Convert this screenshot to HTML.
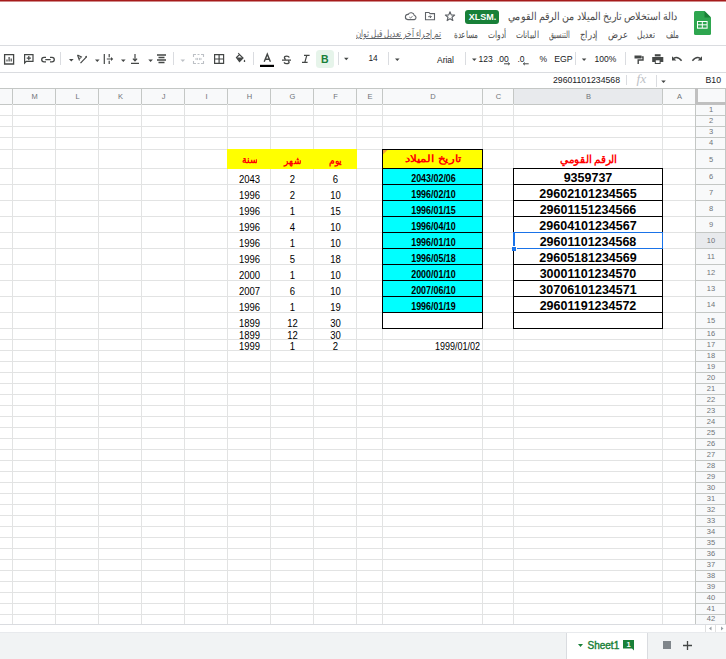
<!DOCTYPE html><html><head><meta charset="utf-8"><style>
*{margin:0;padding:0;box-sizing:border-box}
html,body{width:726px;height:659px;overflow:hidden;background:#fff}
body{position:relative;font-family:"Liberation Sans",sans-serif;color:#202124}
div,span,svg{position:absolute}
.t{white-space:nowrap;line-height:1}
</style></head><body>
<div style="left:0px;top:0px;width:726px;height:1px;background:#a61b1b"></div>
<div style="left:0px;top:1px;width:726px;height:1px;background:#d08a8a"></div>
<div style="left:0px;top:45px;width:726px;height:1px;background:#dadce0"></div>
<div style="left:0px;top:72px;width:726px;height:1px;background:#dadce0"></div>
<svg style="left:693px;top:10px" width="19" height="26" viewBox="0 0 19 26"><path d="M2.5 1H11.5L18 7.5V23.5Q18 25 16.5 25H2.5Q1 25 1 23.5V2.5Q1 1 2.5 1Z" fill="#2ea64f"/><path d="M11.5 1V7.5H18Z" fill="#1a7f37"/><rect x="4" y="11" width="10.6" height="7.7" fill="#fff"/><rect x="5" y="12" width="3.8" height="2.3" fill="#2ea64f"/><rect x="9.8" y="12" width="3.8" height="2.3" fill="#2ea64f"/><rect x="5" y="15.3" width="3.8" height="2.3" fill="#2ea64f"/><rect x="9.8" y="15.3" width="3.8" height="2.3" fill="#2ea64f"/></svg>
<span class="t" style="right:48px;top:11px;font-size:10.5px;color:#4d4d4d;transform:scaleX(0.8695);transform-origin:100% 50%">دالة استخلاص تاريخ الميلاد من الرقم القومي</span>
<div style="left:465px;top:10px;width:34px;height:14px;background:#188038;border-radius:3px"></div>
<span class="t " style="left:465.5px;top:12.8px;width:34px;text-align:center;font-size:9px;font-weight:bold;color:#fff">XLSM.</span>
<svg style="left:440px;top:8px" width="20" height="16" viewBox="0 0 20 16"><path d="M10.00 3.70L11.23 6.90L14.66 7.09L12.00 9.25L12.88 12.56L10.00 10.70L7.12 12.56L8.00 9.25L5.34 7.09L8.77 6.90Z" fill="none" stroke="#5f6368" stroke-width="1.1" stroke-linejoin="round"/></svg>
<svg style="left:420px;top:8px" width="20" height="16" viewBox="0 0 20 16"><path d="M5.5 4.5H9L10 5.6H14.5V11.8H5.5Z" fill="none" stroke="#5f6368" stroke-width="1.1"/><path d="M8.2 8.7H11.3M10 7.4L11.3 8.7L10 10" fill="none" stroke="#5f6368" stroke-width="1"/></svg>
<svg style="left:400px;top:8px" width="20" height="16" viewBox="0 0 20 16"><path d="M7.8 11.6H14.4A2.1 2.1 0 0 0 14.3 7.5A3.3 3.3 0 0 0 8.2 6.4A2.6 2.6 0 0 0 7.8 11.6Z" fill="none" stroke="#5f6368" stroke-width="1.1"/><path d="M9.3 9L10.6 10.1L12.4 8.2" fill="none" stroke="#5f6368" stroke-width="0.9"/></svg>
<span class="t" style="right:47px;top:29.5px;font-size:9.5px;color:#4d4d4d;transform:scaleX(0.7222);transform-origin:100% 50%">ملف</span>
<span class="t" style="right:71px;top:29.5px;font-size:9.5px;color:#4d4d4d;transform:scaleX(0.7500);transform-origin:100% 50%">تعديل</span>
<span class="t" style="right:98px;top:29.5px;font-size:9.5px;color:#4d4d4d;transform:scaleX(0.8333);transform-origin:100% 50%">عرض</span>
<span class="t" style="right:128px;top:29.5px;font-size:9.5px;color:#4d4d4d;transform:scaleX(0.8571);transform-origin:100% 50%">إدراج</span>
<span class="t" style="right:156px;top:29.5px;font-size:9.5px;color:#4d4d4d;transform:scaleX(0.6562);transform-origin:100% 50%">التنسيق</span>
<span class="t" style="right:187px;top:29.5px;font-size:9.5px;color:#4d4d4d;transform:scaleX(0.7667);transform-origin:100% 50%">البيانات</span>
<span class="t" style="right:220px;top:29.5px;font-size:9.5px;color:#4d4d4d;transform:scaleX(0.7500);transform-origin:100% 50%">أدوات</span>
<span class="t" style="right:248px;top:29.5px;font-size:9.5px;color:#4d4d4d;transform:scaleX(0.7273);transform-origin:100% 50%">مساعدة</span>
<span class="t" style="right:285px;top:29px;font-size:9.5px;color:#5f6368;text-decoration:underline;transform:scaleX(0.7131);transform-origin:100% 50%">تم إجراء آخر تعديل قبل ثوان</span>
<svg style="left:0;top:0" width="726" height="88"><path d="M4.6 54.6H13.6V64H4.6Z" fill="none" stroke="#444746" stroke-width="1.3"/><path d="M6.4 59.4H7.6V61.6H6.4ZM8.5 57.1H9.7V61.6H8.5ZM10.6 58.5H11.8V61.6H10.6Z" fill="#444746"/><path d="M24.6 54.6H33V61.3H26.3L24.6 63Z" fill="none" stroke="#444746" stroke-width="1.2"/><path d="M28.8 56V60.2M26.7 58.1H30.9" fill="none" stroke="#444746" stroke-width="1.2"/><path d="M46 57.3H44A2.3 2.3 0 0 0 44 61.9H46M50 57.3H52A2.3 2.3 0 0 1 52 61.9H50M45.3 59.6H50.7" fill="none" stroke="#444746" stroke-width="1.3"/><rect x="60" y="52" width="1" height="13" fill="#dadce0"/><path d="M69 59H73.6L71.3 61.4Z" fill="#444746"/><path d="M77.5 55L82 57.2M77.5 55L79.5 60.5M79 58.5L81 57.8" fill="none" stroke="#444746" stroke-width="1.1"/><path d="M80.5 63.2L86.5 56.8" fill="none" stroke="#444746" stroke-width="1.2"/><path d="M85 56.2L87 55.8L86.7 57.8Z" fill="#444746"/><path d="M95 59.5H99.6L97.3 61.9Z" fill="#444746"/><path d="M104.3 54V64M109.2 54V57.2M109.2 60.8V64M106.8 59H112" fill="none" stroke="#444746" stroke-width="1.2"/><path d="M111 56.9L113.2 59L111 61.1Z" fill="#444746"/><path d="M121 59.5H125.6L123.3 61.9Z" fill="#444746"/><path d="M131 63.3H139M135 54V60.5M132.9 58.6L135 60.9L137.1 58.6" fill="none" stroke="#444746" stroke-width="1.2"/><path d="M148.3 59.5H152.9L150.60000000000002 61.9Z" fill="#444746"/><path d="M157 55H166M158.5 57.5H164.5M157 60H166M158.5 62.5H164.5" fill="none" stroke="#444746" stroke-width="1.3"/><rect x="173" y="52" width="1" height="13" fill="#dadce0"/><path d="M180.5 59.5H185.1L182.8 61.9Z" fill="#bdc1c6"/><path d="M193.5 57V54.5H196M197.5 54.5H199.5M201 54.5H203.5V57M193.5 61V63.5H196M197.5 63.5H199.5M201 63.5H203.5V61" fill="none" stroke="#bdc1c6" stroke-width="1.1"/><path d="M195 59H197.6M201.9 59H199.4" fill="none" stroke="#bdc1c6" stroke-width="1.1"/><path d="M196.9 57.6L198.3 59L196.9 60.4ZM200.1 57.6L198.7 59L200.1 60.4Z" fill="#bdc1c6"/><path d="M214.6 54.6H223.6V63.4H214.6ZM219.1 54.6V63.4M214.6 59H223.6" fill="none" stroke="#444746" stroke-width="1.2"/><path d="M236.5 57.5L239.5 54.5L243 58L239.5 61.5Z" fill="none" stroke="#444746" stroke-width="1.2"/><path d="M236.5 57.5H243L239.5 61.5Z" fill="#444746"/><path d="M238.2 53L239.5 54.5" fill="none" stroke="#444746" stroke-width="1.1"/><path d="M244.5 59.5Q245.6 61 245.2 61.7Q244.5 62.4 243.8 61.7Q243.4 61 244.5 59.5Z" fill="#444746"/><rect x="253" y="52" width="1" height="13" fill="#dadce0"/><path d="M264.2 61.7L267.3 54.2L270.4 61.7M265.3 59.2H269.3" fill="none" stroke="#444746" stroke-width="1.4"/><rect x="260" y="64.8" width="14" height="2.2" fill="#000"/><path d="M289.3 57.4Q288.8 56.1 286.7 56.1Q284.4 56.1 284.4 57.8Q284.4 58.8 285.7 59.4M288.2 61Q289.1 61.6 289.1 62.2Q289.1 63.6 286.7 63.6Q284.7 63.6 284 62.4M282 60.2H291" fill="none" stroke="#444746" stroke-width="1.3"/><path d="M304 55.4H309.6M302 62.3H307.6M306.8 55.4L304.8 62.3" fill="none" stroke="#444746" stroke-width="1.2"/><rect x="316" y="50" width="18" height="18" rx="3.5" fill="#e6f4ea"/><rect x="338" y="52" width="1" height="13" fill="#dadce0"/><path d="M344 57.8H348.6L346.3 60.199999999999996Z" fill="#444746"/><rect x="388" y="52" width="1" height="13" fill="#dadce0"/><path d="M395 58.6H399.6L397.3 61.0Z" fill="#444746"/><rect x="465" y="52" width="1" height="13" fill="#dadce0"/><path d="M472 58.6H476.6L474.3 61.0Z" fill="#444746"/><path d="M504 63.8H509.5M508.2 62.6L509.6 63.8L508.2 65" fill="none" stroke="#444746" stroke-width="1.0"/><path d="M523.5 63.8H528.7M524.8 62.6L523.4 63.8L524.8 65" fill="none" stroke="#444746" stroke-width="1.0"/><rect x="575" y="52" width="1" height="13" fill="#dadce0"/><path d="M581.8 58.6H586.4L584.0999999999999 61.0Z" fill="#444746"/><rect x="625" y="52" width="1" height="13" fill="#dadce0"/><path d="M634.5 55.5H641.5V58.5H634.5Z" fill="#444746"/><path d="M641.5 57H643V60H638.2V64" fill="none" stroke="#444746" stroke-width="1.4"/><path d="M654.8 54.2H660.6V56.4H654.8Z" fill="#444746"/><path d="M652.2 57H663.3V62H660.6V64H654.8V62H652.2Z" fill="#444746"/><path d="M655.8 60.3H659.6V63H655.8Z" fill="#fff"/><path d="M673.5 58.5Q677.6 55.5 681.6 60.8" fill="none" stroke="#444746" stroke-width="1.5"/><path d="M672 56.3V60.6H676.3Z" fill="#444746"/><path d="M700.5 58.5Q696.4 55.5 692.4 60.8" fill="none" stroke="#444746" stroke-width="1.5"/><path d="M702 56.3V60.6H697.7Z" fill="#444746"/><rect x="626" y="75" width="1" height="10" fill="#dadce0"/><rect x="656" y="75" width="1" height="12" fill="#dadce0"/><path d="M661.2 80.6H665.8000000000001L663.5 83.0Z" fill="#444746"/></svg>
<span class="t " style="left:316px;top:53.5px;width:17.5px;text-align:center;font-size:10.5px;font-weight:bold;color:#188038">B</span>
<span class="t " style="left:360.5px;top:54px;width:25px;text-align:center;font-size:8.3px;color:#202124">14</span>
<span class="t " style="left:419px;top:55.5px;width:35px;text-align:right;font-size:8.5px;color:#202124">Arial</span>
<span class="t " style="left:478.5px;top:54.5px;font-size:8.5px;color:#202124">123</span>
<span class="t " style="left:497px;top:54.5px;font-size:8.5px;color:#202124">.00</span>
<span class="t " style="left:517.5px;top:54.5px;font-size:8.5px;color:#202124">.0</span>
<span class="t " style="left:539.5px;top:54.5px;font-size:8.5px;color:#202124">%</span>
<span class="t " style="left:554.3px;top:54.5px;font-size:8.7px;color:#202124">EGP</span>
<span class="t " style="left:594.5px;top:54.5px;font-size:8.5px;color:#202124">100%</span>
<span class="t " style="left:500px;top:75.5px;width:120px;text-align:right;font-size:8.7px;color:#202124">29601101234568</span>
<span class="t " style="left:636.5px;top:72px;font-size:13.5px;font-family:Liberation Serif,serif;font-style:italic;color:#bdc1c6">fx</span>
<span class="t " style="left:690px;top:75.5px;width:31px;text-align:right;font-size:8.7px;color:#202124">B10</span>
<div style="left:0px;top:88px;width:726px;height:16px;background:#f8f9fa"></div>
<div style="left:0px;top:88px;width:726px;height:1px;background:#c4c7c5"></div>
<div style="left:513px;top:89px;width:149px;height:15px;background:#e8eaed"></div>
<div style="left:0px;top:104px;width:695px;height:1px;background:#c4c7c5"></div>
<div style="left:695px;top:104px;width:31px;height:520px;background:#f8f9fa"></div>
<div style="left:696px;top:233px;width:29px;height:15px;background:#e8eaed"></div>
<div style="left:12px;top:104px;width:1px;height:520px;background:#e2e3e3"></div>
<div style="left:12px;top:88px;width:1px;height:16px;background:#c4c7c5"></div>
<div style="left:55px;top:104px;width:1px;height:520px;background:#e2e3e3"></div>
<div style="left:55px;top:88px;width:1px;height:16px;background:#c4c7c5"></div>
<div style="left:98px;top:104px;width:1px;height:520px;background:#e2e3e3"></div>
<div style="left:98px;top:88px;width:1px;height:16px;background:#c4c7c5"></div>
<div style="left:141px;top:104px;width:1px;height:520px;background:#e2e3e3"></div>
<div style="left:141px;top:88px;width:1px;height:16px;background:#c4c7c5"></div>
<div style="left:184px;top:104px;width:1px;height:520px;background:#e2e3e3"></div>
<div style="left:184px;top:88px;width:1px;height:16px;background:#c4c7c5"></div>
<div style="left:227px;top:104px;width:1px;height:520px;background:#e2e3e3"></div>
<div style="left:227px;top:88px;width:1px;height:16px;background:#c4c7c5"></div>
<div style="left:270px;top:104px;width:1px;height:520px;background:#e2e3e3"></div>
<div style="left:270px;top:88px;width:1px;height:16px;background:#c4c7c5"></div>
<div style="left:313px;top:104px;width:1px;height:520px;background:#e2e3e3"></div>
<div style="left:313px;top:88px;width:1px;height:16px;background:#c4c7c5"></div>
<div style="left:356px;top:104px;width:1px;height:520px;background:#e2e3e3"></div>
<div style="left:356px;top:88px;width:1px;height:16px;background:#c4c7c5"></div>
<div style="left:382px;top:104px;width:1px;height:520px;background:#e2e3e3"></div>
<div style="left:382px;top:88px;width:1px;height:16px;background:#c4c7c5"></div>
<div style="left:482px;top:104px;width:1px;height:520px;background:#e2e3e3"></div>
<div style="left:482px;top:88px;width:1px;height:16px;background:#c4c7c5"></div>
<div style="left:513px;top:104px;width:1px;height:520px;background:#e2e3e3"></div>
<div style="left:513px;top:88px;width:1px;height:16px;background:#c4c7c5"></div>
<div style="left:662px;top:104px;width:1px;height:520px;background:#e2e3e3"></div>
<div style="left:662px;top:88px;width:1px;height:16px;background:#c4c7c5"></div>
<div style="left:0px;top:115px;width:695px;height:1px;background:#e2e3e3"></div>
<div style="left:695px;top:115px;width:31px;height:1px;background:#c4c7c5"></div>
<div style="left:0px;top:126px;width:695px;height:1px;background:#e2e3e3"></div>
<div style="left:695px;top:126px;width:31px;height:1px;background:#c4c7c5"></div>
<div style="left:0px;top:137px;width:695px;height:1px;background:#e2e3e3"></div>
<div style="left:695px;top:137px;width:31px;height:1px;background:#c4c7c5"></div>
<div style="left:0px;top:149px;width:695px;height:1px;background:#e2e3e3"></div>
<div style="left:695px;top:149px;width:31px;height:1px;background:#c4c7c5"></div>
<div style="left:0px;top:168px;width:695px;height:1px;background:#e2e3e3"></div>
<div style="left:695px;top:168px;width:31px;height:1px;background:#c4c7c5"></div>
<div style="left:0px;top:184px;width:695px;height:1px;background:#e2e3e3"></div>
<div style="left:695px;top:184px;width:31px;height:1px;background:#c4c7c5"></div>
<div style="left:0px;top:200px;width:695px;height:1px;background:#e2e3e3"></div>
<div style="left:695px;top:200px;width:31px;height:1px;background:#c4c7c5"></div>
<div style="left:0px;top:216px;width:695px;height:1px;background:#e2e3e3"></div>
<div style="left:695px;top:216px;width:31px;height:1px;background:#c4c7c5"></div>
<div style="left:0px;top:232px;width:695px;height:1px;background:#e2e3e3"></div>
<div style="left:695px;top:232px;width:31px;height:1px;background:#c4c7c5"></div>
<div style="left:0px;top:248px;width:695px;height:1px;background:#e2e3e3"></div>
<div style="left:695px;top:248px;width:31px;height:1px;background:#c4c7c5"></div>
<div style="left:0px;top:264px;width:695px;height:1px;background:#e2e3e3"></div>
<div style="left:695px;top:264px;width:31px;height:1px;background:#c4c7c5"></div>
<div style="left:0px;top:280px;width:695px;height:1px;background:#e2e3e3"></div>
<div style="left:695px;top:280px;width:31px;height:1px;background:#c4c7c5"></div>
<div style="left:0px;top:296px;width:695px;height:1px;background:#e2e3e3"></div>
<div style="left:695px;top:296px;width:31px;height:1px;background:#c4c7c5"></div>
<div style="left:0px;top:312px;width:695px;height:1px;background:#e2e3e3"></div>
<div style="left:695px;top:312px;width:31px;height:1px;background:#c4c7c5"></div>
<div style="left:0px;top:328px;width:695px;height:1px;background:#e2e3e3"></div>
<div style="left:695px;top:328px;width:31px;height:1px;background:#c4c7c5"></div>
<div style="left:0px;top:339px;width:695px;height:1px;background:#e2e3e3"></div>
<div style="left:695px;top:339px;width:31px;height:1px;background:#c4c7c5"></div>
<div style="left:0px;top:350px;width:695px;height:1px;background:#e2e3e3"></div>
<div style="left:695px;top:350px;width:31px;height:1px;background:#c4c7c5"></div>
<div style="left:0px;top:361px;width:695px;height:1px;background:#e2e3e3"></div>
<div style="left:695px;top:361px;width:31px;height:1px;background:#c4c7c5"></div>
<div style="left:0px;top:372px;width:695px;height:1px;background:#e2e3e3"></div>
<div style="left:695px;top:372px;width:31px;height:1px;background:#c4c7c5"></div>
<div style="left:0px;top:383px;width:695px;height:1px;background:#e2e3e3"></div>
<div style="left:695px;top:383px;width:31px;height:1px;background:#c4c7c5"></div>
<div style="left:0px;top:394px;width:695px;height:1px;background:#e2e3e3"></div>
<div style="left:695px;top:394px;width:31px;height:1px;background:#c4c7c5"></div>
<div style="left:0px;top:405px;width:695px;height:1px;background:#e2e3e3"></div>
<div style="left:695px;top:405px;width:31px;height:1px;background:#c4c7c5"></div>
<div style="left:0px;top:416px;width:695px;height:1px;background:#e2e3e3"></div>
<div style="left:695px;top:416px;width:31px;height:1px;background:#c4c7c5"></div>
<div style="left:0px;top:427px;width:695px;height:1px;background:#e2e3e3"></div>
<div style="left:695px;top:427px;width:31px;height:1px;background:#c4c7c5"></div>
<div style="left:0px;top:438px;width:695px;height:1px;background:#e2e3e3"></div>
<div style="left:695px;top:438px;width:31px;height:1px;background:#c4c7c5"></div>
<div style="left:0px;top:449px;width:695px;height:1px;background:#e2e3e3"></div>
<div style="left:695px;top:449px;width:31px;height:1px;background:#c4c7c5"></div>
<div style="left:0px;top:460px;width:695px;height:1px;background:#e2e3e3"></div>
<div style="left:695px;top:460px;width:31px;height:1px;background:#c4c7c5"></div>
<div style="left:0px;top:471px;width:695px;height:1px;background:#e2e3e3"></div>
<div style="left:695px;top:471px;width:31px;height:1px;background:#c4c7c5"></div>
<div style="left:0px;top:482px;width:695px;height:1px;background:#e2e3e3"></div>
<div style="left:695px;top:482px;width:31px;height:1px;background:#c4c7c5"></div>
<div style="left:0px;top:493px;width:695px;height:1px;background:#e2e3e3"></div>
<div style="left:695px;top:493px;width:31px;height:1px;background:#c4c7c5"></div>
<div style="left:0px;top:504px;width:695px;height:1px;background:#e2e3e3"></div>
<div style="left:695px;top:504px;width:31px;height:1px;background:#c4c7c5"></div>
<div style="left:0px;top:515px;width:695px;height:1px;background:#e2e3e3"></div>
<div style="left:695px;top:515px;width:31px;height:1px;background:#c4c7c5"></div>
<div style="left:0px;top:526px;width:695px;height:1px;background:#e2e3e3"></div>
<div style="left:695px;top:526px;width:31px;height:1px;background:#c4c7c5"></div>
<div style="left:0px;top:537px;width:695px;height:1px;background:#e2e3e3"></div>
<div style="left:695px;top:537px;width:31px;height:1px;background:#c4c7c5"></div>
<div style="left:0px;top:548px;width:695px;height:1px;background:#e2e3e3"></div>
<div style="left:695px;top:548px;width:31px;height:1px;background:#c4c7c5"></div>
<div style="left:0px;top:559px;width:695px;height:1px;background:#e2e3e3"></div>
<div style="left:695px;top:559px;width:31px;height:1px;background:#c4c7c5"></div>
<div style="left:0px;top:570px;width:695px;height:1px;background:#e2e3e3"></div>
<div style="left:695px;top:570px;width:31px;height:1px;background:#c4c7c5"></div>
<div style="left:0px;top:581px;width:695px;height:1px;background:#e2e3e3"></div>
<div style="left:695px;top:581px;width:31px;height:1px;background:#c4c7c5"></div>
<div style="left:0px;top:592px;width:695px;height:1px;background:#e2e3e3"></div>
<div style="left:695px;top:592px;width:31px;height:1px;background:#c4c7c5"></div>
<div style="left:0px;top:603px;width:695px;height:1px;background:#e2e3e3"></div>
<div style="left:695px;top:603px;width:31px;height:1px;background:#c4c7c5"></div>
<div style="left:0px;top:614px;width:695px;height:1px;background:#e2e3e3"></div>
<div style="left:695px;top:614px;width:31px;height:1px;background:#c4c7c5"></div>
<div style="left:0px;top:624px;width:695px;height:1px;background:#e2e3e3"></div>
<div style="left:695px;top:624px;width:31px;height:1px;background:#c4c7c5"></div>
<div style="left:0px;top:624px;width:726px;height:1px;background:#dadce0"></div>
<div style="left:695px;top:104px;width:1px;height:520px;background:#c4c7c5"></div>
<div style="left:725px;top:88px;width:1px;height:536px;background:#c4c7c5"></div>
<div style="left:695px;top:88px;width:3px;height:16px;background:#c0c0c0"></div>
<div style="left:695px;top:102px;width:31px;height:3px;background:#c0c0c0"></div>
<span class="t " style="left:13px;top:93px;width:43px;text-align:center;font-size:7.5px;color:#6f7479">M</span>
<span class="t " style="left:56px;top:93px;width:43px;text-align:center;font-size:7.5px;color:#6f7479">L</span>
<span class="t " style="left:99px;top:93px;width:43px;text-align:center;font-size:7.5px;color:#6f7479">K</span>
<span class="t " style="left:142px;top:93px;width:43px;text-align:center;font-size:7.5px;color:#6f7479">J</span>
<span class="t " style="left:185px;top:93px;width:43px;text-align:center;font-size:7.5px;color:#6f7479">I</span>
<span class="t " style="left:228px;top:93px;width:43px;text-align:center;font-size:7.5px;color:#6f7479">H</span>
<span class="t " style="left:271px;top:93px;width:43px;text-align:center;font-size:7.5px;color:#6f7479">G</span>
<span class="t " style="left:314px;top:93px;width:43px;text-align:center;font-size:7.5px;color:#6f7479">F</span>
<span class="t " style="left:357px;top:93px;width:26px;text-align:center;font-size:7.5px;color:#6f7479">E</span>
<span class="t " style="left:383px;top:93px;width:100px;text-align:center;font-size:7.5px;color:#6f7479">D</span>
<span class="t " style="left:483px;top:93px;width:31px;text-align:center;font-size:7.5px;color:#6f7479">C</span>
<span class="t " style="left:514px;top:93px;width:149px;text-align:center;font-size:7.5px;color:#6f7479">B</span>
<span class="t " style="left:663px;top:93px;width:33px;text-align:center;font-size:7.5px;color:#6f7479">A</span>
<span class="t " style="left:696.5px;top:106.2px;width:29px;text-align:center;font-size:7.5px;color:#6f7479">1</span>
<span class="t " style="left:696.5px;top:117.2px;width:29px;text-align:center;font-size:7.5px;color:#6f7479">2</span>
<span class="t " style="left:696.5px;top:128.2px;width:29px;text-align:center;font-size:7.5px;color:#6f7479">3</span>
<span class="t " style="left:696.5px;top:139.2px;width:29px;text-align:center;font-size:7.5px;color:#6f7479">4</span>
<span class="t " style="left:696.5px;top:155.5px;width:29px;text-align:center;font-size:7.5px;color:#6f7479">5</span>
<span class="t " style="left:696.5px;top:172.5px;width:29px;text-align:center;font-size:7.5px;color:#6f7479">6</span>
<span class="t " style="left:696.5px;top:188.5px;width:29px;text-align:center;font-size:7.5px;color:#6f7479">7</span>
<span class="t " style="left:696.5px;top:204.5px;width:29px;text-align:center;font-size:7.5px;color:#6f7479">8</span>
<span class="t " style="left:696.5px;top:220.5px;width:29px;text-align:center;font-size:7.5px;color:#6f7479">9</span>
<span class="t " style="left:696.5px;top:236.5px;width:29px;text-align:center;font-size:7.5px;color:#6f7479">10</span>
<span class="t " style="left:696.5px;top:252.5px;width:29px;text-align:center;font-size:7.5px;color:#6f7479">11</span>
<span class="t " style="left:696.5px;top:268.5px;width:29px;text-align:center;font-size:7.5px;color:#6f7479">12</span>
<span class="t " style="left:696.5px;top:284.5px;width:29px;text-align:center;font-size:7.5px;color:#6f7479">13</span>
<span class="t " style="left:696.5px;top:300.5px;width:29px;text-align:center;font-size:7.5px;color:#6f7479">14</span>
<span class="t " style="left:696.5px;top:316.5px;width:29px;text-align:center;font-size:7.5px;color:#6f7479">15</span>
<span class="t " style="left:696.5px;top:330.2px;width:29px;text-align:center;font-size:7.5px;color:#6f7479">16</span>
<span class="t " style="left:696.5px;top:341.2px;width:29px;text-align:center;font-size:7.5px;color:#6f7479">17</span>
<span class="t " style="left:696.5px;top:352.2px;width:29px;text-align:center;font-size:7.5px;color:#6f7479">18</span>
<span class="t " style="left:696.5px;top:363.2px;width:29px;text-align:center;font-size:7.5px;color:#6f7479">19</span>
<span class="t " style="left:696.5px;top:374.2px;width:29px;text-align:center;font-size:7.5px;color:#6f7479">20</span>
<span class="t " style="left:696.5px;top:385.2px;width:29px;text-align:center;font-size:7.5px;color:#6f7479">21</span>
<span class="t " style="left:696.5px;top:396.2px;width:29px;text-align:center;font-size:7.5px;color:#6f7479">22</span>
<span class="t " style="left:696.5px;top:407.2px;width:29px;text-align:center;font-size:7.5px;color:#6f7479">23</span>
<span class="t " style="left:696.5px;top:418.2px;width:29px;text-align:center;font-size:7.5px;color:#6f7479">24</span>
<span class="t " style="left:696.5px;top:429.2px;width:29px;text-align:center;font-size:7.5px;color:#6f7479">25</span>
<span class="t " style="left:696.5px;top:440.2px;width:29px;text-align:center;font-size:7.5px;color:#6f7479">26</span>
<span class="t " style="left:696.5px;top:451.2px;width:29px;text-align:center;font-size:7.5px;color:#6f7479">27</span>
<span class="t " style="left:696.5px;top:462.2px;width:29px;text-align:center;font-size:7.5px;color:#6f7479">28</span>
<span class="t " style="left:696.5px;top:473.2px;width:29px;text-align:center;font-size:7.5px;color:#6f7479">29</span>
<span class="t " style="left:696.5px;top:484.2px;width:29px;text-align:center;font-size:7.5px;color:#6f7479">30</span>
<span class="t " style="left:696.5px;top:495.2px;width:29px;text-align:center;font-size:7.5px;color:#6f7479">31</span>
<span class="t " style="left:696.5px;top:506.2px;width:29px;text-align:center;font-size:7.5px;color:#6f7479">32</span>
<span class="t " style="left:696.5px;top:517.2px;width:29px;text-align:center;font-size:7.5px;color:#6f7479">33</span>
<span class="t " style="left:696.5px;top:528.2px;width:29px;text-align:center;font-size:7.5px;color:#6f7479">34</span>
<span class="t " style="left:696.5px;top:539.2px;width:29px;text-align:center;font-size:7.5px;color:#6f7479">35</span>
<span class="t " style="left:696.5px;top:550.2px;width:29px;text-align:center;font-size:7.5px;color:#6f7479">36</span>
<span class="t " style="left:696.5px;top:561.2px;width:29px;text-align:center;font-size:7.5px;color:#6f7479">37</span>
<span class="t " style="left:696.5px;top:572.2px;width:29px;text-align:center;font-size:7.5px;color:#6f7479">38</span>
<span class="t " style="left:696.5px;top:583.2px;width:29px;text-align:center;font-size:7.5px;color:#6f7479">39</span>
<span class="t " style="left:696.5px;top:594.2px;width:29px;text-align:center;font-size:7.5px;color:#6f7479">40</span>
<span class="t " style="left:696.5px;top:605.2px;width:29px;text-align:center;font-size:7.5px;color:#6f7479">41</span>
<span class="t " style="left:696.5px;top:615.2px;width:29px;text-align:center;font-size:7.5px;color:#6f7479">42</span>
<div style="left:227px;top:149px;width:130px;height:20px;background:#ffff00"></div>
<div style="left:382px;top:149px;width:101px;height:19px;background:#ffff00"></div>
<div style="left:382px;top:168px;width:101px;height:144px;background:#00ffff"></div>
<div style="left:382px;top:149px;width:101px;height:1px;background:#000"></div>
<div style="left:382px;top:168px;width:101px;height:1px;background:#000"></div>
<div style="left:382px;top:184px;width:101px;height:1px;background:#000"></div>
<div style="left:382px;top:200px;width:101px;height:1px;background:#000"></div>
<div style="left:382px;top:216px;width:101px;height:1px;background:#000"></div>
<div style="left:382px;top:232px;width:101px;height:1px;background:#000"></div>
<div style="left:382px;top:248px;width:101px;height:1px;background:#000"></div>
<div style="left:382px;top:264px;width:101px;height:1px;background:#000"></div>
<div style="left:382px;top:280px;width:101px;height:1px;background:#000"></div>
<div style="left:382px;top:296px;width:101px;height:1px;background:#000"></div>
<div style="left:382px;top:312px;width:101px;height:1px;background:#000"></div>
<div style="left:382px;top:328px;width:101px;height:1px;background:#000"></div>
<div style="left:382px;top:149px;width:1px;height:180px;background:#000"></div>
<div style="left:482px;top:149px;width:1px;height:180px;background:#000"></div>
<div style="left:513px;top:168px;width:150px;height:1px;background:#000"></div>
<div style="left:513px;top:184px;width:150px;height:1px;background:#000"></div>
<div style="left:513px;top:200px;width:150px;height:1px;background:#000"></div>
<div style="left:513px;top:216px;width:150px;height:1px;background:#000"></div>
<div style="left:513px;top:232px;width:150px;height:1px;background:#000"></div>
<div style="left:513px;top:248px;width:150px;height:1px;background:#000"></div>
<div style="left:513px;top:264px;width:150px;height:1px;background:#000"></div>
<div style="left:513px;top:280px;width:150px;height:1px;background:#000"></div>
<div style="left:513px;top:296px;width:150px;height:1px;background:#000"></div>
<div style="left:513px;top:312px;width:150px;height:1px;background:#000"></div>
<div style="left:513px;top:328px;width:150px;height:1px;background:#000"></div>
<div style="left:513px;top:168px;width:1px;height:161px;background:#000"></div>
<div style="left:662px;top:168px;width:1px;height:161px;background:#000"></div>
<svg style="left:383px;top:150px" width="5" height="5"><path d="M0 0H4.6L0 4.6Z" fill="#f2a13a"/></svg>
<span class="t" style="right:469px;top:154.5px;font-size:9.5px;color:#f00;font-weight:bold;transform:scaleX(0.9375);transform-origin:100% 50%">سنة</span>
<span class="t" style="right:425px;top:155.5px;font-size:9.5px;color:#f00;font-weight:bold;transform:scaleX(0.8947);transform-origin:100% 50%">شهر</span>
<span class="t" style="right:384px;top:155.5px;font-size:9.5px;color:#f00;font-weight:bold;transform:scaleX(0.9286);transform-origin:100% 50%">يوم</span>
<span class="t" style="right:264px;top:154px;font-size:10px;color:#f00;font-weight:bold;transform:scaleX(1.1929);transform-origin:100% 50%">تاريخ الميلاد</span>
<span class="t" style="right:109px;top:154px;font-size:11px;color:#f00;font-weight:bold;transform:scaleX(0.9490);transform-origin:100% 50%">الرقم القومي</span>
<span class="t " style="left:227.7px;top:175px;width:43px;text-align:center;font-size:10px;color:#000;transform:scaleX(0.95)">2043</span>
<span class="t " style="left:270.7px;top:175px;width:43px;text-align:center;font-size:10px;color:#000;transform:scaleX(0.95)">2</span>
<span class="t " style="left:313.7px;top:175px;width:43px;text-align:center;font-size:10px;color:#000;transform:scaleX(0.95)">6</span>
<span class="t " style="left:382.5px;top:174px;width:101px;text-align:center;font-size:10px;font-weight:bold;color:#000;transform:scaleX(0.89)">2043/02/06</span>
<span class="t " style="left:513px;top:172px;width:150px;text-align:center;font-size:12.5px;font-weight:bold;color:#000">9359737</span>
<span class="t " style="left:227.7px;top:191px;width:43px;text-align:center;font-size:10px;color:#000;transform:scaleX(0.95)">1996</span>
<span class="t " style="left:270.7px;top:191px;width:43px;text-align:center;font-size:10px;color:#000;transform:scaleX(0.95)">2</span>
<span class="t " style="left:313.7px;top:191px;width:43px;text-align:center;font-size:10px;color:#000;transform:scaleX(0.95)">10</span>
<span class="t " style="left:382.5px;top:190px;width:101px;text-align:center;font-size:10px;font-weight:bold;color:#000;transform:scaleX(0.89)">1996/02/10</span>
<span class="t " style="left:513px;top:188px;width:150px;text-align:center;font-size:12.5px;font-weight:bold;color:#000">29602101234565</span>
<span class="t " style="left:227.7px;top:207px;width:43px;text-align:center;font-size:10px;color:#000;transform:scaleX(0.95)">1996</span>
<span class="t " style="left:270.7px;top:207px;width:43px;text-align:center;font-size:10px;color:#000;transform:scaleX(0.95)">1</span>
<span class="t " style="left:313.7px;top:207px;width:43px;text-align:center;font-size:10px;color:#000;transform:scaleX(0.95)">15</span>
<span class="t " style="left:382.5px;top:206px;width:101px;text-align:center;font-size:10px;font-weight:bold;color:#000;transform:scaleX(0.89)">1996/01/15</span>
<span class="t " style="left:513px;top:204px;width:150px;text-align:center;font-size:12.5px;font-weight:bold;color:#000">29601151234566</span>
<span class="t " style="left:227.7px;top:223px;width:43px;text-align:center;font-size:10px;color:#000;transform:scaleX(0.95)">1996</span>
<span class="t " style="left:270.7px;top:223px;width:43px;text-align:center;font-size:10px;color:#000;transform:scaleX(0.95)">4</span>
<span class="t " style="left:313.7px;top:223px;width:43px;text-align:center;font-size:10px;color:#000;transform:scaleX(0.95)">10</span>
<span class="t " style="left:382.5px;top:222px;width:101px;text-align:center;font-size:10px;font-weight:bold;color:#000;transform:scaleX(0.89)">1996/04/10</span>
<span class="t " style="left:513px;top:220px;width:150px;text-align:center;font-size:12.5px;font-weight:bold;color:#000">29604101234567</span>
<span class="t " style="left:227.7px;top:239px;width:43px;text-align:center;font-size:10px;color:#000;transform:scaleX(0.95)">1996</span>
<span class="t " style="left:270.7px;top:239px;width:43px;text-align:center;font-size:10px;color:#000;transform:scaleX(0.95)">1</span>
<span class="t " style="left:313.7px;top:239px;width:43px;text-align:center;font-size:10px;color:#000;transform:scaleX(0.95)">10</span>
<span class="t " style="left:382.5px;top:238px;width:101px;text-align:center;font-size:10px;font-weight:bold;color:#000;transform:scaleX(0.89)">1996/01/10</span>
<span class="t " style="left:513px;top:236px;width:150px;text-align:center;font-size:12.5px;font-weight:bold;color:#000">29601101234568</span>
<span class="t " style="left:227.7px;top:255px;width:43px;text-align:center;font-size:10px;color:#000;transform:scaleX(0.95)">1996</span>
<span class="t " style="left:270.7px;top:255px;width:43px;text-align:center;font-size:10px;color:#000;transform:scaleX(0.95)">5</span>
<span class="t " style="left:313.7px;top:255px;width:43px;text-align:center;font-size:10px;color:#000;transform:scaleX(0.95)">18</span>
<span class="t " style="left:382.5px;top:254px;width:101px;text-align:center;font-size:10px;font-weight:bold;color:#000;transform:scaleX(0.89)">1996/05/18</span>
<span class="t " style="left:513px;top:252px;width:150px;text-align:center;font-size:12.5px;font-weight:bold;color:#000">29605181234569</span>
<span class="t " style="left:227.7px;top:271px;width:43px;text-align:center;font-size:10px;color:#000;transform:scaleX(0.95)">2000</span>
<span class="t " style="left:270.7px;top:271px;width:43px;text-align:center;font-size:10px;color:#000;transform:scaleX(0.95)">1</span>
<span class="t " style="left:313.7px;top:271px;width:43px;text-align:center;font-size:10px;color:#000;transform:scaleX(0.95)">10</span>
<span class="t " style="left:382.5px;top:270px;width:101px;text-align:center;font-size:10px;font-weight:bold;color:#000;transform:scaleX(0.89)">2000/01/10</span>
<span class="t " style="left:513px;top:268px;width:150px;text-align:center;font-size:12.5px;font-weight:bold;color:#000">30001101234570</span>
<span class="t " style="left:227.7px;top:287px;width:43px;text-align:center;font-size:10px;color:#000;transform:scaleX(0.95)">2007</span>
<span class="t " style="left:270.7px;top:287px;width:43px;text-align:center;font-size:10px;color:#000;transform:scaleX(0.95)">6</span>
<span class="t " style="left:313.7px;top:287px;width:43px;text-align:center;font-size:10px;color:#000;transform:scaleX(0.95)">10</span>
<span class="t " style="left:382.5px;top:286px;width:101px;text-align:center;font-size:10px;font-weight:bold;color:#000;transform:scaleX(0.89)">2007/06/10</span>
<span class="t " style="left:513px;top:284px;width:150px;text-align:center;font-size:12.5px;font-weight:bold;color:#000">30706101234571</span>
<span class="t " style="left:227.7px;top:303px;width:43px;text-align:center;font-size:10px;color:#000;transform:scaleX(0.95)">1996</span>
<span class="t " style="left:270.7px;top:303px;width:43px;text-align:center;font-size:10px;color:#000;transform:scaleX(0.95)">1</span>
<span class="t " style="left:313.7px;top:303px;width:43px;text-align:center;font-size:10px;color:#000;transform:scaleX(0.95)">19</span>
<span class="t " style="left:382.5px;top:302px;width:101px;text-align:center;font-size:10px;font-weight:bold;color:#000;transform:scaleX(0.89)">1996/01/19</span>
<span class="t " style="left:513px;top:300px;width:150px;text-align:center;font-size:12.5px;font-weight:bold;color:#000">29601191234572</span>
<span class="t " style="left:227.7px;top:319px;width:43px;text-align:center;font-size:10px;color:#000;transform:scaleX(0.95)">1899</span>
<span class="t " style="left:270.7px;top:319px;width:43px;text-align:center;font-size:10px;color:#000;transform:scaleX(0.95)">12</span>
<span class="t " style="left:313.7px;top:319px;width:43px;text-align:center;font-size:10px;color:#000;transform:scaleX(0.95)">30</span>
<span class="t " style="left:227.7px;top:331px;width:43px;text-align:center;font-size:10px;color:#000;transform:scaleX(0.95)">1899</span>
<span class="t " style="left:270.7px;top:331px;width:43px;text-align:center;font-size:10px;color:#000;transform:scaleX(0.95)">12</span>
<span class="t " style="left:313.7px;top:331px;width:43px;text-align:center;font-size:10px;color:#000;transform:scaleX(0.95)">30</span>
<span class="t " style="left:227.7px;top:342px;width:43px;text-align:center;font-size:10px;color:#000;transform:scaleX(0.95)">1999</span>
<span class="t " style="left:270.7px;top:342px;width:43px;text-align:center;font-size:10px;color:#000;transform:scaleX(0.95)">1</span>
<span class="t " style="left:313.7px;top:342px;width:43px;text-align:center;font-size:10px;color:#000;transform:scaleX(0.95)">2</span>
<span class="t " style="left:382px;top:342px;width:98px;text-align:right;font-size:10px;color:#000;transform:scaleX(0.9);transform-origin:100% 50%">1999/01/02</span>
<div style="left:513px;top:232px;width:150px;height:1px;background:#1a73e8"></div>
<div style="left:513px;top:248px;width:150px;height:1px;background:#1a73e8"></div>
<div style="left:513px;top:232px;width:2px;height:16px;background:#1a73e8"></div>
<div style="left:662px;top:232px;width:1px;height:17px;background:#1a73e8"></div>
<div style="left:512px;top:246px;width:5px;height:5px;background:#fff"></div>
<div style="left:512px;top:247px;width:4px;height:4px;background:#1a73e8"></div>
<div style="left:0px;top:632px;width:726px;height:27px;background:#f1f3f4"></div>
<div style="left:0px;top:632px;width:726px;height:1px;background:#e8eaed"></div>
<div style="left:566px;top:633px;width:82px;height:26px;background:#fff;border-left:1px solid #dadce0;border-right:1px solid #dadce0"></div>
<span class="t " style="left:587.5px;top:640.5px;font-size:10px;color:#188038;-webkit-text-stroke:0.4px #188038">Sheet1</span>
<svg style="left:578px;top:644px" width="5" height="3"><path d="M0 0H5L2.5 3Z" fill="#188038"/></svg>
<svg style="left:623px;top:640px" width="12" height="11"><path d="M0 0H11V10.5L9 8.5H0Z" fill="#188038"/></svg>
<span class="t " style="left:623px;top:641px;width:11px;text-align:center;font-size:7.5px;color:#fff;font-weight:bold">1</span>
<div style="left:663px;top:641px;width:8px;height:8px;background:#80868b"></div>
<svg style="left:682px;top:640px" width="11" height="11"><path d="M5.5 1V10M1 5.5H10" stroke="#444746" stroke-width="1.3"/></svg>
<div style="left:705px;top:625px;width:1px;height:7px;background:#e0e0e0"></div>
<div style="left:715px;top:625px;width:1px;height:7px;background:#e0e0e0"></div>
<svg style="left:705px;top:625px" width="21" height="7"><path d="M6.5 1.5L4 3.5L6.5 5.5Z" fill="#9aa0a6"/><path d="M16 1.5L18.5 3.5L16 5.5Z" fill="#9aa0a6"/></svg>
</body></html>
